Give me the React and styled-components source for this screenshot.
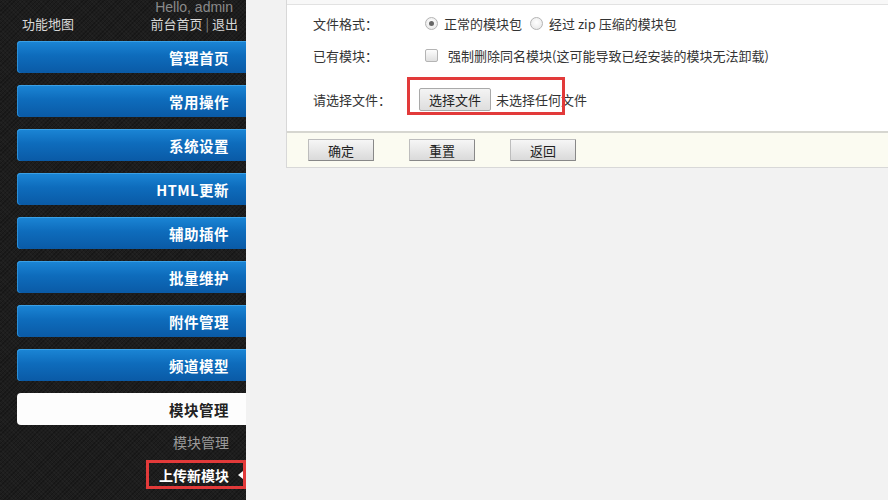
import React from "react";
import styled, { createGlobalStyle } from "styled-components";

const Global = createGlobalStyle`
  html, body { margin: 0; padding: 0; }
  body {
    background: #f2f2f2;
    font-family: "Microsoft YaHei", "Noto Sans CJK SC", "Liberation Sans", sans-serif;
    width: 888px; height: 500px; overflow: hidden;
  }
`;

const Page = styled.div`
  display: flex;
  width: 888px;
  height: 500px;
`;

const Sidebar = styled.aside`
  width: 246px;
  flex: none;
  background-color: #1d1d1d;
  background-image:
    repeating-linear-gradient(45deg, rgba(255,255,255,0.025) 0 1px, transparent 1px 3px),
    repeating-linear-gradient(-45deg, rgba(0,0,0,0.25) 0 1px, transparent 1px 3px);
  display: flex;
  flex-direction: column;
  padding-left: 17px;
  box-sizing: border-box;
`;

const Hello = styled.div`
  height: 14px;
  line-height: 15px;
  font-family: "Liberation Sans", sans-serif;
  font-size: 14px;
  color: #8a8a8a;
  text-align: right;
  padding-right: 13px;
`;

const TopLinks = styled.div`
  display: flex;
  justify-content: space-between;
  align-items: center;
  height: 19px;
  margin-left: 5px;
  padding-right: 8px;
  font-size: 13px;
  color: #d8d8d8;
`;

const Sep = styled.span`
  color: #888;
  margin: 0 3px;
`;

const Menu = styled.nav`
  display: flex;
  flex-direction: column;
  gap: 12px;
  margin-top: 8px;
`;

const MenuItem = styled.div`
  height: 32px;
  border-radius: 4px 0 0 4px;
  display: flex;
  align-items: center;
  justify-content: flex-end;
  padding-right: 17px;
  font-size: 14.5px;
  font-weight: 600;
  color: ${p => (p.$active ? "#222" : "#fff")};
  background: ${p =>
    p.$active
      ? "#fdfdfd"
      : "linear-gradient(to bottom, #1b86d6 0%, #0e6cbc 45%, #0a5aa6 100%)"};
  box-shadow: ${p => (p.$active ? "none" : "inset 0 1px 0 #3aa0e6, inset 1px 0 0 #2b8fd8")};
  letter-spacing: 0.5px;
`;

const SubMenu = styled.div`
  display: flex;
  flex-direction: column;
  align-items: flex-end;
  margin-top: 2px;
`;

const SubItem = styled.div`
  height: 30px;
  display: flex;
  align-items: center;
  padding-right: 17px;
  font-size: 14px;
  color: #9a9a9a;
`;

const Highlight = styled.div`
  border: 3px solid #e23a3a;
  height: 29px;
  width: 100px;
  box-sizing: border-box;
  display: flex;
  align-items: center;
  justify-content: flex-end;
  padding-right: 14px;
  position: relative;
  margin-top: 3px;
  color: #fff;
  font-weight: 600;
  font-size: 14px;
`;

const Arrow = styled.span`
  position: absolute;
  right: 0px;
  top: 50%;
  margin-top: -4px;
  width: 0; height: 0;
  border-top: 4px solid transparent;
  border-bottom: 4px solid transparent;
  border-right: 5px solid #fff;
`;

const Main = styled.main`
  flex: 1;
  padding-left: 40px;
`;

const Panel = styled.section`
  background: #fff;
  border-left: 1px solid #d8d8d8;
  border-bottom: 1px solid #d8d8d8;
  font-size: 13px;
  color: #333;
`;

const TopStrip = styled.div`
  height: 4px;
  background: #f8f8f8;
  border-bottom: 1px solid #e2e2e2;
`;

const Row = styled.div`
  display: grid;
  grid-template-columns: 112px 1fr;
  align-items: center;
  height: ${p => p.$h}px;
  padding-left: 26px;
`;

const Label = styled.div`
  color: #333;
`;

const Control = styled.div`
  display: flex;
  align-items: center;
  gap: 6px;
`;

const Radio = styled.span`
  width: 11px; height: 11px;
  border-radius: 50%;
  border: 1px solid #b4b4b4;
  background: radial-gradient(circle at 50% 40%, #fff 0%, #e4e4e4 100%);
  display: inline-flex;
  align-items: center;
  justify-content: center;
  margin-left: ${p => p.$ml || 0}px;
  &::after {
    content: "";
    width: 5px; height: 5px; border-radius: 50%;
    background: ${p => (p.$checked ? "#666" : "transparent")};
  }
`;

const Check = styled.span`
  width: 11px; height: 11px;
  border: 1px solid #b4b4b4;
  border-radius: 2px;
  background: linear-gradient(#fdfdfd, #e0e0e0);
  margin-right: 4px;
`;

const FileBox = styled.div`
  position: relative;
  display: flex;
  align-items: center;
  gap: 5px;
  margin-left: -6px;
`;

const RedFrame = styled.div`
  position: absolute;
  left: -12px;
  top: -11px;
  width: 158px;
  height: 38px;
  border: 3px solid #e23a3a;
  box-sizing: border-box;
  pointer-events: none;
`;

const FileButton = styled.button`
  height: 23px;
  padding: 0 9px;
  font-family: inherit;
  font-size: 13px;
  color: #222;
  background: linear-gradient(#f4f4f4, #dedede);
  border: 1px solid #a9a9a9;
  border-radius: 2px;
`;

const Footer = styled.div`
  background: #fbfbf1;
  border-top: 2px solid #d6d6d0;
  height: 34px;
  display: flex;
  align-items: center;
  padding-left: 21px;
  gap: 35px;
`;

const Btn = styled.button`
  width: 66px;
  height: 22px;
  font-family: inherit;
  font-size: 13px;
  color: #222;
  background: linear-gradient(#f6f6f6, #dadada);
  border: 1px solid #bdbdbd;
  border-right-color: #888;
  border-bottom-color: #888;
  border-radius: 1px;
  padding: 0;
`;

const menu = ["管理首页", "常用操作", "系统设置", "HTML更新", "辅助插件", "批量维护", "附件管理", "频道模型"];

export default function App() {
  return (
    <>
      <Global />
      <Page>
        <Sidebar>
          <Hello>Hello, admin</Hello>
          <TopLinks>
            <span>功能地图</span>
            <span>前台首页<Sep>|</Sep>退出</span>
          </TopLinks>
          <Menu>
            {menu.map(m => (
              <MenuItem key={m}>{m}</MenuItem>
            ))}
            <MenuItem $active>模块管理</MenuItem>
          </Menu>
          <SubMenu>
            <SubItem>模块管理</SubItem>
            <Highlight>
              上传新模块
              <Arrow />
            </Highlight>
          </SubMenu>
        </Sidebar>
        <Main>
          <Panel>
            <TopStrip />
            <Row $h={37}>
              <Label>文件格式：</Label>
              <Control>
                <Radio $checked />
                <span>正常的模块包</span>
                <Radio $ml={2} />
                <span>经过 zip 压缩的模块包</span>
              </Control>
            </Row>
            <Row $h={26}>
              <Label>已有模块：</Label>
              <Control>
                <Check />
                <span>强制删除同名模块(这可能导致已经安装的模块无法卸载)</span>
              </Control>
            </Row>
            <Row $h={63}>
              <Label>请选择文件：</Label>
              <FileBox>
                <RedFrame />
                <FileButton>选择文件</FileButton>
                <span>未选择任何文件</span>
              </FileBox>
            </Row>
            <Footer>
              <Btn>确定</Btn>
              <Btn>重置</Btn>
              <Btn>返回</Btn>
            </Footer>
          </Panel>
        </Main>
      </Page>
    </>
  );
}
